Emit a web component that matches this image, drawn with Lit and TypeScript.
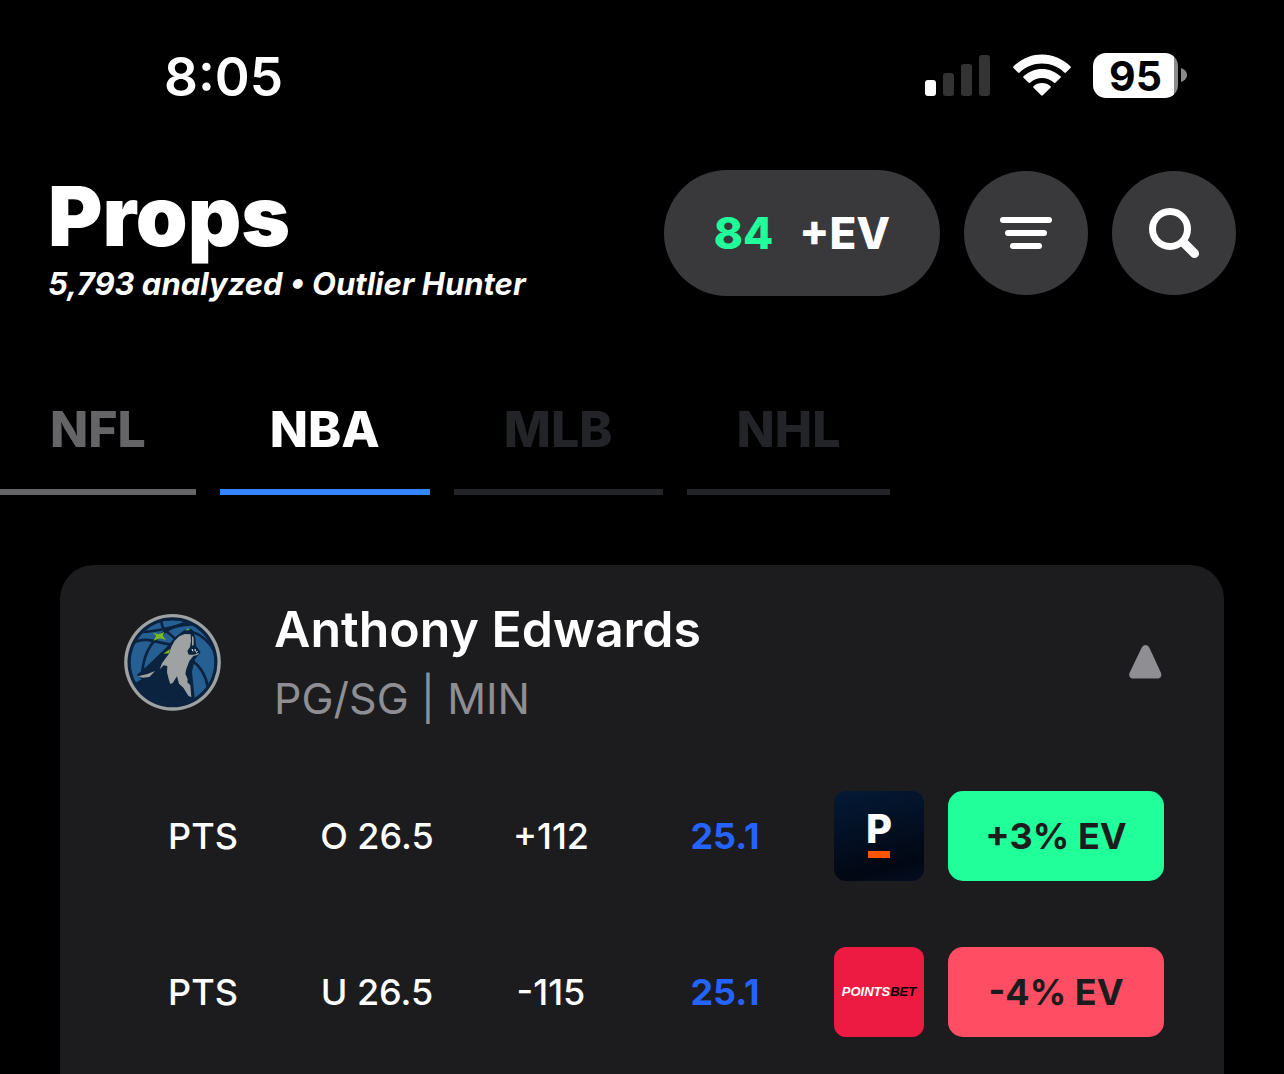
import { LitElement, html, css } from "lit";
import { customElement, property, state } from "lit/decorators.js";
import { classMap } from "lit/directives/class-map.js";

interface Prop {
  market: string;
  line: string;
  odds: string;
  projection: string;
  book: "parx" | "pointsbet";
  ev: string;
  positive: boolean;
}

const PROPS: Prop[] = [
  { market: "PTS", line: "O 26.5", odds: "+112", projection: "25.1", book: "parx", ev: "+3% EV", positive: true },
  { market: "PTS", line: "U 26.5", odds: "-115", projection: "25.1", book: "pointsbet", ev: "-4% EV", positive: false },
];

const LEAGUES = [
  { name: "NFL", available: true },
  { name: "NBA", available: true },
  { name: "MLB", available: false },
  { name: "NHL", available: false },
];

@customElement("status-bar")
class StatusBar extends LitElement {
  static styles = css`
    :host {
      display: flex;
      align-items: center;
      justify-content: space-between;
      height: 46px;
      padding: 52px 97px 2px 164px;
      color: #fff;
    }
    .time {
      padding-top: 4px;
      font-size: 53px;
      font-weight: 600;
      line-height: 48px;
    }
    .icons {
      display: flex;
      align-items: center;
      gap: 22px;
    }
    .icons svg {
      display: block;
    }
    .battery {
      display: flex;
      align-items: center;
      gap: 3px;
    }
    .level {
      box-sizing: border-box;
      width: 85px;
      height: 45px;
      border-radius: 13px;
      background: linear-gradient(to right, #fff 81px, #8a8a8a 81px);
      color: #000;
      font-size: 41px;
      font-weight: 700;
      line-height: 46px;
      text-align: center;
    }
  `;
  render() {
    return html`
      <span class="time">8:05</span>
      <div class="icons">
        <svg width="66" height="42" viewBox="0 0 66 42" aria-hidden="true">
          <rect x="0" y="26" width="11" height="16" rx="3" fill="#fff" />
          <rect x="18" y="19" width="11" height="23" rx="3" fill="#333" />
          <rect x="36" y="10" width="11" height="32" rx="3" fill="#333" />
          <rect x="54" y="1" width="11" height="41" rx="3" fill="#333" />
        </svg>
        <svg width="58" height="42" viewBox="0 0 58 42" fill="#fff" aria-hidden="true">
          <path d="M.6 12.2C8.600 4.400 18.500.4 29 .4s20.400 4 28.400 11.800c.6.600.6 1.200.1 1.700l-4.600 4.600c-.5.500-1 .5-1.600 0C45 12.600 37.300 9.600 29 9.600s-16 3-22.300 8.900c-.6.500-1.100.5-1.600 0L.5 13.900c-.5-.5-.5-1.100.1-1.700z" />
          <path d="M10.500 22.200C15.700 17.500 22 14.900 29 14.900s13.300 2.600 18.500 7.300c.5.500.5 1 0 1.500l-4.900 4.900c-.5.500-1 .5-1.500.1-3.500-3-7.600-4.700-12.100-4.700s-8.600 1.700-12.100 4.700c-.5.400-1 .4-1.500-.1l-4.900-4.900c-.5-.5-.5-1 0-1.500z" />
          <path d="M20.500 32.200c2.400-2 5.300-3.200 8.500-3.200s6.100 1.200 8.500 3.200c.5.500.5 1 0 1.500l-7.700 7.600c-.5.500-1.100.5-1.600 0l-7.700-7.600c-.5-.5-.5-1 0-1.500z" />
        </svg>
        <div class="battery">
          <div class="level">95</div>
          <svg width="6" height="16" viewBox="0 0 6 16" aria-hidden="true">
            <path d="M0 1c3 1 6 3.500 6 7s-3 6-6 7z" fill="#8a8a8a" />
          </svg>
        </div>
      </div>
    `;
  }
}

@customElement("team-logo")
class TeamLogo extends LitElement {
  static styles = css`
    :host,
    svg {
      display: block;
    }
  `;
  render() {
    return html`
      <svg width="97" height="97" viewBox="42 41 291 291" role="img" aria-label="Minnesota">
        <defs><clipPath id="ball"><circle cx="187.500" cy="186" r="126" /></clipPath></defs>
        <circle cx="187.500" cy="186" r="145" fill="#9ea2a2" />
        <circle cx="187.500" cy="186" r="135" fill="#0c2340" />
        <g clip-path="url(#ball)">
          <circle cx="187.500" cy="186" r="126" fill="#266092" />
          <g fill="none" stroke="#0c2340" stroke-width="8">
            <path d="M90 96Q165 92 232 66" />
            <path d="M154 58Q154 82 168 92T222 140" />
            <path d="M58 135Q90 112 126 121T196 135" />
            <path d="M96 235Q96 160 138 116Q180 72 246 72" />
            <path d="M240 92Q292 108 316 158" />
            <path d="M242 178Q284 205 294 262" />
          </g>
          <path d="M50 262L96 236L80 224L112 196L168 142L196 110L222 90L246 86L256 112L258 136L272 156L254 178L246 214L254 292L230 330H90z" fill="#0c2340" />
        </g>
        <path d="M226 100L242 101L243 122L240 140L232 152L236 163L252 163L267 157L264 163L250 167L238 182L229 206L226 220L233 236L232 246L241 255L244 291L235 286L226 272L220 262L207 250L201 228L188 248L181 251L176 236L171 216L172 197L161 195L149 207L156 189L169 171L177 160L184 139L194 121L208 108z" fill="#9ea2a2" />
        <path d="M246 106L251 112L251 134L246 136z" fill="#9ea2a2" />
        <path d="M84 228Q110 224 135 212L126 222L118 230L98 232z" fill="#9ea2a2" />
        <path d="M246 146l3 7M255 146l1 7M262 152l-3 5" stroke="#fff" stroke-width="3" />
        <path d="M128 97l17 5 18-7-5 11 10 13-18-5-20 7 9-15zM160 160l20-14-3 13z" fill="#78be20" />
        <path d="M223 101l4-10 9-4 8 4-1 11z" fill="#0c2340" />
        <path d="M227 91l8-7 4 6-4-1z" fill="#78be20" />
      </svg>
    `;
  }
}

@customElement("book-logo")
class BookLogo extends LitElement {
  @property() book: Prop["book"] = "parx";
  static styles = css`
    .tile {
      display: flex;
      flex-direction: column;
      align-items: center;
      justify-content: center;
      gap: 7px;
      width: 90px;
      height: 90px;
      border-radius: 12px;
      overflow: hidden;
      color: #fff;
    }
    .parx {
      background: linear-gradient(165deg, #041a36, #020713 80%, #040e22);
    }
    .letter {
      font-size: 40px;
      font-weight: 800;
      line-height: 30px;
    }
    .bar {
      width: 22px;
      height: 7px;
      background: #ff5400;
    }
    .pointsbet {
      background: #ed1b41;
      font-family: "Liberation Sans Narrow", "Liberation Sans", sans-serif;
      font-size: 13px;
      font-weight: 700;
      font-style: italic;
      line-height: 20px;
    }
    .dark {
      color: #000;
    }
  `;
  render() {
    return this.book === "parx"
      ? html`<div class="tile parx"><span class="letter">P</span><span class="bar"></span></div>`
      : html`<div class="tile pointsbet"><span>POINTS<span class="dark">BET</span></span></div>`;
  }
}

@customElement("player-card")
class PlayerCard extends LitElement {
  @state() private open = true;
  static styles = css`
    :host {
      display: block;
      padding: 36px 60px 37px 56px;
      border-radius: 34px 34px 0 0;
      background: #1c1c1e;
      color: #fff;
    }
    .player {
      display: flex;
      align-items: flex-start;
      gap: 53px;
      padding-left: 8px;
    }
    team-logo {
      padding-top: 13px;
    }
    .who {
      flex: 1;
    }
    .name {
      margin: 0;
      font-size: 50px;
      font-weight: 600;
      line-height: 56px;
    }
    .team {
      margin: 0;
      padding-top: 8px;
      color: #8e8e93;
      font-size: 43px;
      line-height: 66px;
    }
    .toggle {
      padding: 44px 0 0;
      border: 0;
      background: none;
      cursor: pointer;
    }
    .toggle svg {
      display: block;
    }
    .closed svg {
      transform: rotate(180deg);
    }
    table {
      width: 100%;
      margin-top: 60px;
      border-spacing: 0;
      table-layout: fixed;
      font-size: 36px;
      font-weight: 500;
      line-height: 44px;
      text-align: center;
    }
    td {
      height: 90px;
      padding: 0;
    }
    tr + tr td {
      padding-top: 66px;
    }
    .book-col {
      width: 136px;
    }
    .ev-col {
      width: 216px;
    }
    td.book {
      padding-left: 22px;
    }
    .projection {
      color: #2563ff;
      font-weight: 700;
    }
    .ev {
      display: block;
      width: 100%;
      height: 90px;
      padding: 0;
      border: 0;
      border-radius: 15px;
      background: #ff4e63;
      color: #1c1c1e;
      font: 700 36px/44px Inter, sans-serif;
      cursor: pointer;
    }
    .ev.positive {
      background: #21ff9a;
    }
  `;
  render() {
    return html`
      <div class="player">
        <team-logo></team-logo>
        <div class="who">
          <h2 class="name">Anthony Edwards</h2>
          <p class="team">PG/SG | MIN</p>
        </div>
        <button
          class=${classMap({ toggle: true, closed: !this.open })}
          aria-label="Toggle props"
          aria-expanded=${this.open}
          @click=${() => (this.open = !this.open)}
        >
          <svg width="36" height="34" viewBox="0 0 36 34">
            <path d="M13.500 3C14.500 1 16 0 17.500 0s3 1 4 3l11.500 25c1 3-.5 5.500-3.500 5.500H5C2 33.500.5 31 1.500 28z" fill="#8e8e93" />
          </svg>
        </button>
      </div>
      ${this.open
        ? html`<table>
            <colgroup>
              <col /><col /><col /><col />
              <col class="book-col" /><col class="ev-col" />
            </colgroup>
            <tbody>
              ${PROPS.map(
                (p) => html`<tr>
                  <td>${p.market}</td>
                  <td>${p.line}</td>
                  <td>${p.odds}</td>
                  <td class="projection">${p.projection}</td>
                  <td class="book"><book-logo .book=${p.book}></book-logo></td>
                  <td><button class=${classMap({ ev: true, positive: p.positive })}>${p.ev}</button></td>
                </tr>`
              )}
            </tbody>
          </table>`
        : null}
    `;
  }
}

@customElement("app-root")
class AppRoot extends LitElement {
  @state() private league = "NBA";
  static styles = css`
    :host {
      display: flex;
      flex-direction: column;
      min-height: 100vh;
      background: #000;
      color: #fff;
      font-family: Inter, sans-serif;
    }
    button {
      padding: 0;
      border: 0;
      color: inherit;
      font-family: inherit;
      cursor: pointer;
    }
    header {
      display: flex;
      align-items: flex-start;
      justify-content: space-between;
      padding: 70px 48px 0;
    }
    h1 {
      margin: 0;
      font-size: 83px;
      font-weight: 900;
      line-height: 92px;
    }
    .sub {
      margin: 0;
      font-size: 31px;
      font-style: italic;
      font-weight: 700;
      line-height: 44px;
    }
    .actions {
      display: flex;
      align-items: center;
      gap: 24px;
    }
    .action {
      display: flex;
      align-items: center;
      justify-content: center;
      min-width: 124px;
      height: 124px;
      border-radius: 63px;
      background: #39393b;
    }
    .evs {
      gap: 26px;
      width: 276px;
      height: 126px;
      font-size: 44px;
      font-weight: 800;
    }
    .count {
      color: #21ff9a;
    }
    nav {
      display: flex;
      gap: 24px;
      padding-top: 70px;
    }
    .tab {
      box-sizing: border-box;
      height: 119px;
      padding: 0 50px 8px;
      border-bottom: 6px solid;
      background: none;
      color: #232427;
      font-size: 50px;
      font-weight: 800;
      line-height: 60px;
    }
    .tab.available {
      color: #656567;
    }
    .tab.selected {
      border-color: #3485ff;
      color: #fff;
    }
    player-card {
      flex: 1;
      margin: 70px 60px 0;
    }
  `;
  render() {
    return html`
      <status-bar></status-bar>
      <header>
        <div>
          <h1>Props</h1>
          <p class="sub">5,793 analyzed • Outlier Hunter</p>
        </div>
        <div class="actions">
          <button class="action evs"><span class="count">84</span><span>+EV</span></button>
          <button class="action" aria-label="Filter">
            <svg width="52" height="32" viewBox="0 0 52 32" fill="#fff">
              <rect width="52" height="6" rx="3" />
              <rect x="5" y="13" width="42" height="6" rx="3" />
              <rect x="10" y="26" width="32" height="6" rx="3" />
            </svg>
          </button>
          <button class="action" aria-label="Search">
            <svg width="52" height="52" viewBox="0 0 52 52" fill="none" stroke="#fff">
              <circle cx="22" cy="22" r="17.500" stroke-width="7" />
              <path d="M36 36l10.500 10.500" stroke-width="9" stroke-linecap="round" />
            </svg>
          </button>
        </div>
      </header>
      <nav role="tablist">
        ${LEAGUES.map(
          (l) => html`<button
            role="tab"
            aria-selected=${l.name === this.league}
            class=${classMap({ tab: true, available: l.available, selected: l.name === this.league })}
            ?disabled=${!l.available}
            @click=${() => (this.league = l.name)}
          >
            ${l.name}
          </button>`
        )}
      </nav>
      <player-card></player-card>
    `;
  }
}
